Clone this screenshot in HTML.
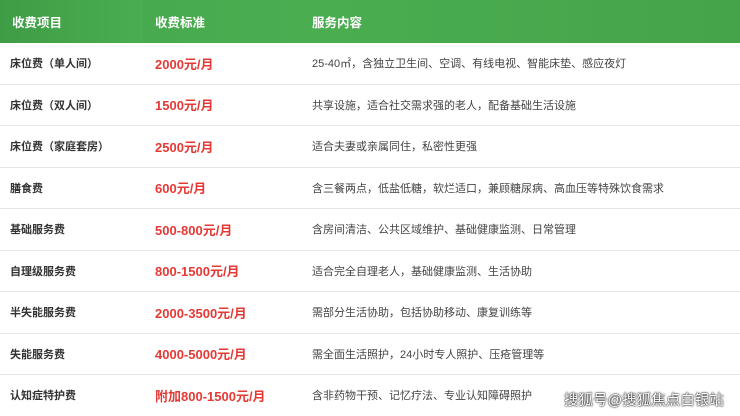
<!DOCTYPE html>
<html><head><meta charset="utf-8"><style>
body{margin:0;width:740px;height:414px;overflow:hidden;background:#fff;font-family:"Liberation Sans","Noto Sans CJK SC",sans-serif}
table{border-collapse:collapse;width:740px;table-layout:fixed}
th{height:43px;background:linear-gradient(90deg,#3f9d45,#4aad50);color:#fff;font-size:12.5px;font-weight:bold;text-align:left;padding:0 0 0 12px}
th:nth-child(2){background:linear-gradient(90deg,#48aa4e,#4aad50)}
th:nth-child(3){background:linear-gradient(90deg,#4aae50,#45a34a)}
td{height:40.5px;border-bottom:1px solid #e6e6e6;padding:0 0 0 12px;font-size:11px;color:#444}
td:first-child{font-weight:bold;color:#333;font-size:11px;padding-left:10px}
td:nth-child(2){font-weight:bold;color:#e53935;font-size:13px}
.wm{position:absolute;left:564px;top:389px;font-size:14.5px;white-space:nowrap;color:#fff;text-shadow:0 0 2px #000,0 0 1px #000}
</style></head><body>
<table>
<colgroup><col style="width:143px"><col style="width:157px"><col></colgroup>
<tr><th>收费项目</th><th>收费标准</th><th>服务内容</th></tr>
<tr><td>床位费（单人间）</td><td>2000元/月</td><td>25-40㎡，含独立卫生间、空调、有线电视、智能床垫、感应夜灯</td></tr>
<tr><td>床位费（双人间）</td><td>1500元/月</td><td>共享设施，适合社交需求强的老人，配备基础生活设施</td></tr>
<tr><td>床位费（家庭套房）</td><td>2500元/月</td><td>适合夫妻或亲属同住，私密性更强</td></tr>
<tr><td>膳食费</td><td>600元/月</td><td>含三餐两点，低盐低糖，软烂适口，兼顾糖尿病、高血压等特殊饮食需求</td></tr>
<tr><td>基础服务费</td><td>500-800元/月</td><td>含房间清洁、公共区域维护、基础健康监测、日常管理</td></tr>
<tr><td>自理级服务费</td><td>800-1500元/月</td><td>适合完全自理老人，基础健康监测、生活协助</td></tr>
<tr><td>半失能服务费</td><td>2000-3500元/月</td><td>需部分生活协助，包括协助移动、康复训练等</td></tr>
<tr><td>失能服务费</td><td>4000-5000元/月</td><td>需全面生活照护，24小时专人照护、压疮管理等</td></tr>
<tr><td style="border:none">认知症特护费</td><td style="border:none">附加800-1500元/月</td><td style="border:none">含非药物干预、记忆疗法、专业认知障碍照护</td></tr>
</table>
<div class="wm">搜狐号@搜狐焦点白银站</div>
</body></html>
